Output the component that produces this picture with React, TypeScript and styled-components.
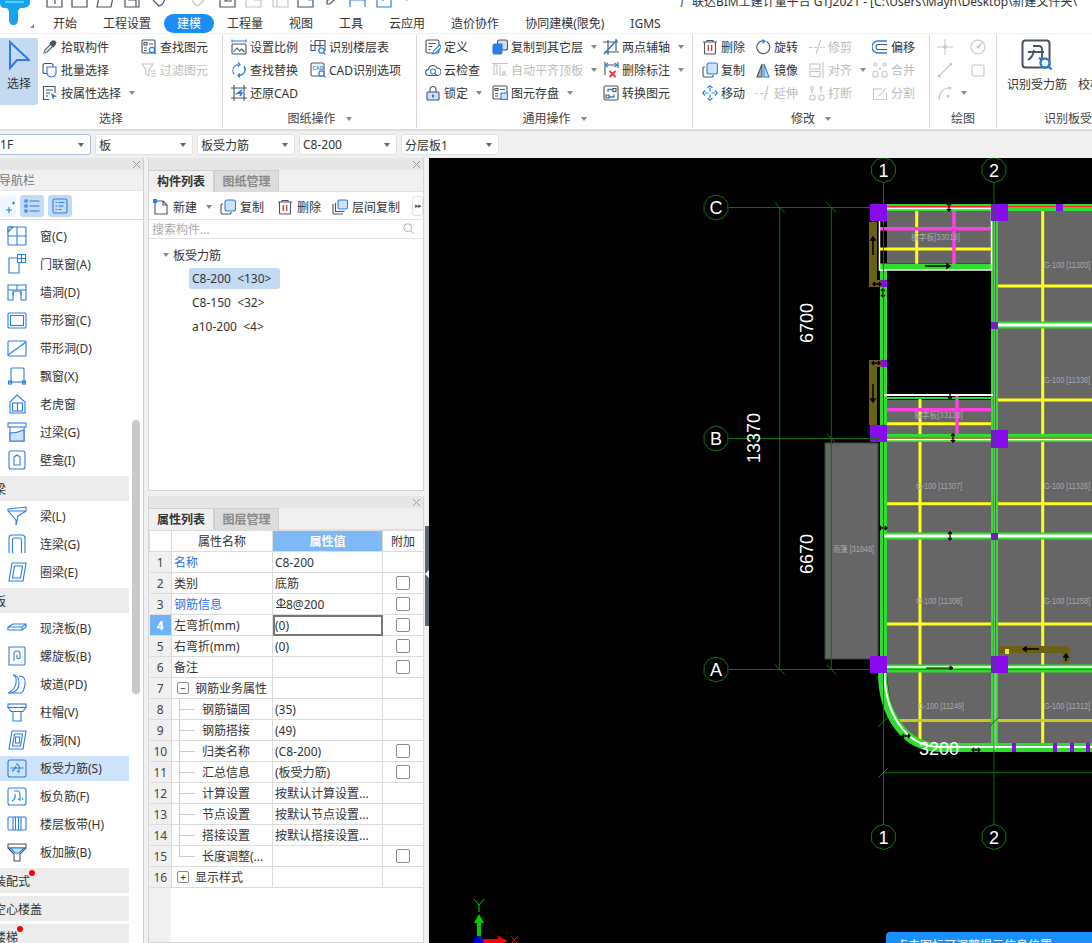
import React from 'react';
import styled, { createGlobalStyle } from 'styled-components';

const DK = '#4a5361';
const BL = '#2a7de8';
const GR = '#c6c6c6';
const LB = '#cfe2fb';

const Global = createGlobalStyle`
  html, body { margin: 0; padding: 0; background: #f0f0f0; }
  body { font-family: "Noto Sans", "Noto Sans CJK SC", sans-serif; font-size: 12px; color: #333; }
  * { box-sizing: border-box; }
`;

const Page = styled.div`width:1092px;height:943px;overflow:hidden;display:flex;flex-direction:column;background:#f0f0f0;`;
const Header = styled.header`height:33px;display:flex;background:#fff;flex:none;`;
const LogoBox = styled.div`width:40px;height:33px;flex:none;overflow:hidden;`;
const LogoSvg = styled.svg`display:block;width:40px;height:33px;`;
const HeaderRight = styled.div`flex:1;min-width:0;display:flex;flex-direction:column;`;
const QuickRow = styled.div`height:14px;overflow:hidden;display:flex;align-items:flex-start;position:relative;`;
const QuickIcons = styled.div`width:640px;flex:none;height:8px;overflow:hidden;position:relative;`;
const QuickIcon = styled.svg<{ $x: number }>`position:absolute;left:${p => p.$x - 40}px;top:-8px;width:20px;height:16px;fill:none;stroke-width:1.2;`;
const Title = styled.div`margin-top:-6px;line-height:16px;white-space:nowrap;color:#333;`;
const Tabs = styled.nav`height:19px;display:flex;`;
const Tab = styled.div<{ $on?: boolean }>`
  padding:0 13px;line-height:19px;border-radius:10px;
  color:${p => p.$on ? '#fff' : '#333'};background:${p => p.$on ? '#1b8ef5' : 'transparent'};
`;

const Ribbon = styled.section`height:98px;flex:none;display:flex;background:#fff;border-top:1px solid #f0f0f0;border-bottom:2px solid #dcdcdc;overflow:hidden;`;
const Group = styled.div<{ $w: number; $pad?: number; $last?: boolean }>`
  width:${p => p.$w}px;flex:none;height:93px;margin-top:1px;display:flex;flex-direction:column;
  padding-left:${p => p.$pad ?? 0}px;
  border-right:${p => p.$last ? 'none' : '1px solid #d8d8d8'};
`;
const GroupBody = styled.div`flex:1;display:flex;`;
const GroupLabel = styled.div<{ $pad?: number }>`
  height:18px;line-height:18px;display:flex;justify-content:center;align-items:center;gap:5px;color:#444;white-space:nowrap;
  margin-left:${p => -(p.$pad ?? 0)}px;
`;
const Col = styled.div<{ $w: number }>`width:${p => p.$w}px;flex:none;display:flex;flex-direction:column;`;
const Item = styled.div<{ $off?: boolean }>`
  height:23px;display:flex;align-items:center;gap:3px;white-space:nowrap;color:${p => p.$off ? '#bdbdbd' : '#333'};
`;
const Caret = styled.i`display:inline-block;width:0;height:0;border:3.5px solid transparent;border-top:4px solid #888;border-bottom:0;margin-left:5px;flex:none;`;
const BigSelect = styled.div`width:38px;height:67px;margin:3px 4px 0 0;background:#c4daf2;border-radius:0 3px 3px 0;display:flex;flex-direction:column;align-items:center;flex:none;color:#333;padding-top:2px;`;
const SelectArrow = styled.svg`width:22px;height:34px;flex:none;fill:none;stroke:${BL};stroke-width:2;`;
const BigTool = styled.div<{ $w: number; $ml?: number }>`display:flex;flex-direction:column;align-items:center;width:${p => p.$w}px;margin-left:${p => p.$ml ?? 0}px;flex:none;gap:4px;padding-top:4px;white-space:nowrap;`;
const Ic = styled.svg<{ $s?: number }>`width:${p => p.$s ?? 16}px;height:${p => p.$s ?? 16}px;flex:none;fill:none;stroke-width:1.1;`;

const ComboBar = styled.div`height:26px;flex:none;display:flex;gap:4px;padding-top:3px;margin-left:-7px;background:#f0f0f0;`;
const Combo = styled.div<{ $first?: boolean }>`
  width:98px;height:21px;background:#fff;border:1px solid ${p => p.$first ? '#a9c0de' : '#e2e2e2'};border-radius:3px;
  display:flex;align-items:center;justify-content:space-between;padding:0 6px 0 3px;color:#333;
`;
const ComboArrow = styled.i`width:0;height:0;border:3px solid transparent;border-top:4px solid #666;border-bottom:0;`;

const Main = styled.main`flex:1;min-height:0;display:flex;padding-top:1px;`;
const Nav = styled.aside`width:144px;flex:none;display:flex;flex-direction:column;background:#fff;border-right:1px solid #d0d0d0;position:relative;overflow:hidden;`;
const Strip = styled.div`height:12px;flex:none;background:#e6e6e6;display:flex;justify-content:flex-end;align-items:center;padding-right:2px;`;
const CloseX = styled.svg`width:9px;height:9px;stroke:#999;stroke-width:1;fill:none;`;
const NavTitle = styled.div`height:21px;flex:none;background:#f0f0f0;color:#777;line-height:21px;text-indent:-1px;border-bottom:1px solid #e4e4e4;white-space:nowrap;`;
const NavTools = styled.div`height:29px;flex:none;display:flex;align-items:center;gap:4px;border-bottom:1px solid #dcdcdc;padding-top:1px;`;
const NavTool = styled.div<{ $on?: boolean; $w: number }>`width:${p => p.$w}px;height:22px;border-radius:3px;background:${p => p.$on ? '#c4daf2' : '#f1f6fd'};display:flex;align-items:center;justify-content:center;`;
const NavList = styled.div`flex:1;min-height:0;padding-top:4px;display:flex;flex-direction:column;gap:3px;overflow:hidden;`;
const NavRow = styled.div<{ $on?: boolean }>`height:25px;flex:none;width:129px;display:flex;align-items:center;padding:0 0 1px 7px;gap:13px;white-space:nowrap;background:${p => p.$on ? '#cfe3fb' : 'transparent'};`;
const NavHead = styled.div`height:25px;flex:none;width:129px;background:#ececec;display:flex;align-items:center;white-space:nowrap;`;
const HeadText = styled.span`margin-left:-6px;position:relative;`;
const RedDot = styled.i`position:absolute;right:-5px;top:-2px;width:6px;height:6px;border-radius:50%;background:#f00;`;
const ScrollThumb = styled.div`position:absolute;left:132px;top:262px;width:8px;height:274px;border-radius:4px;background:#c9c9c9;`;

const Mid = styled.div`width:276px;flex:none;margin-left:4px;display:flex;flex-direction:column;gap:5px;`;
const Panel = styled.section<{ $h?: number }>`
  ${p => p.$h ? `height:${p.$h}px;flex:none;` : 'flex:1;min-height:0;'}
  display:flex;flex-direction:column;background:#fff;border:1px solid #d4d4d4;border-top:0;
`;
const TabRow = styled.div`height:22px;flex:none;display:flex;background:#f0f0f0;border-bottom:1px solid #e0e0e0;`;
const PTab = styled.div<{ $on?: boolean }>`
  width:65px;height:22px;text-align:center;line-height:22px;font-weight:700;
  color:${p => p.$on ? '#333' : '#8a8a8a'};background:${p => p.$on ? '#f0f0f0' : '#dcdcdc'};
  border:1px solid #cfcfcf;border-left:${p => p.$on ? 0 : '1px solid #cfcfcf'};border-bottom:0;
`;
const PTools = styled.div`height:28px;flex:none;display:flex;align-items:center;padding:2px 0 0 4px;border-bottom:1px solid #e4e4e4;`;
const PTool = styled.div<{ $w: number }>`width:${p => p.$w}px;flex:none;display:flex;align-items:center;gap:4px;white-space:nowrap;color:#333;`;
const MoreBtn = styled.div`width:11px;height:20px;border:1px solid #e2e2e2;border-radius:3px;margin:-2px 0 0 10px;display:flex;align-items:center;justify-content:center;font-size:7px;color:#555;letter-spacing:-1px;`;
const SearchRow = styled.div`height:19px;flex:none;display:flex;align-items:center;justify-content:space-between;padding:0 7px 0 3px;color:#aaa;border-bottom:1px solid #e4e4e4;`;
const Tree = styled.div`flex:1;padding-top:5px;`;
const TreeRoot = styled.div`height:22px;display:flex;align-items:center;padding-left:14px;gap:4px;`;
const TreeArrow = styled.i`width:0;height:0;border:3px solid transparent;border-top:4px solid #888;border-bottom:0;`;
const Leaf = styled.div`height:24px;display:flex;align-items:center;padding-left:40px;white-space:pre;`;
const LeafText = styled.span<{ $on?: boolean }>`height:21px;line-height:21px;padding:0 3px;border-radius:3px;min-width:91px;background:${p => p.$on ? '#c4daf2' : 'transparent'};`;

const TableWrap = styled.div`flex:1;min-height:0;background:linear-gradient(to right,#f0f0f0 22px,#fff 22px);`;
const Table = styled.table`border-collapse:collapse;table-layout:fixed;width:274px;`;
const Tr = styled.tr`height:21px;`;
const Idx = styled.td<{ $on?: boolean }>`
  width:22px;padding:0;text-align:center;border:1px solid #dcdcdc;border-left:0;
  background:${p => p.$on ? '#6fb2f5' : '#f0f0f0'};color:${p => p.$on ? '#fff' : '#444'};font-weight:${p => p.$on ? 700 : 400};
`;
const Td = styled.td<{ $blue?: boolean; $pad?: number; $focus?: boolean }>`
  padding:0 0 0 ${p => p.$pad ?? 2}px;height:21px;border:1px solid #dcdcdc;white-space:nowrap;overflow:hidden;line-height:19px;
  color:${p => p.$blue ? '#2a6fe8' : '#333'};
  ${p => p.$focus ? 'outline:2px solid #777;outline-offset:-2px;' : ''}
`;
const Th = styled.td<{ $on?: boolean }>`
  height:21px;padding:0;text-align:center;border:1px solid #dcdcdc;
  background:${p => p.$on ? '#7db8f7' : '#fff'};color:${p => p.$on ? '#fff' : '#333'};font-weight:${p => p.$on ? 700 : 400};
`;
const CheckCell = styled.td`padding:0;border:1px solid #dcdcdc;text-align:center;line-height:0;`;
const Check = styled.i`display:inline-block;width:14px;height:14px;border:1px solid #8a8a8a;border-radius:2px;background:#fff;vertical-align:middle;`;
const RowInner = styled.div`display:flex;align-items:center;height:19px;`;
const Branch = styled.i<{ $end?: boolean }>`
  width:23px;height:21px;flex:none;margin:-1px 0;
  background:linear-gradient(#ccc,#ccc) 0 0/1px ${p => p.$end ? '50%' : '100%'} no-repeat,linear-gradient(#ccc,#ccc) 0 50%/16px 1px no-repeat;
`;
const Expander = styled.i`width:12px;height:12px;border:1px solid #888;border-radius:2px;display:flex;align-items:center;justify-content:center;font-style:normal;font-size:10px;line-height:10px;margin:0 6px 0 3px;flex:none;`;
const Rebar = styled.svg`width:10px;height:11px;margin:-3px 0 0 1px;fill:none;stroke:#333;stroke-width:1;vertical-align:middle;`;

const Divider = styled.div`width:5px;flex:none;background:#f0f0f0;position:relative;`;
const Handle = styled.div`position:absolute;left:1px;top:368px;width:4px;height:100px;background:#5a6570;&::after{content:'';position:absolute;top:44px;left:0;border:4px solid transparent;border-right:4px solid #fff;border-left:0;}`;
const Canvas = styled.div`flex:1;min-width:0;background:#000;position:relative;overflow:hidden;`;
const Drawing = styled.svg`display:block;width:663px;height:785px;`;
const Toast = styled.div`position:absolute;left:457px;bottom:-9px;width:260px;height:20px;background:#1890ff;border-radius:4px 0 0 0;color:#fff;padding:7px 0 0 10px;line-height:14px;white-space:nowrap;`;

const I = ({ children, s, box = 16 }: { children: React.ReactNode; s?: number; box?: number }) => (
  <Ic $s={s} viewBox={`0 0 ${box} ${box}`}>{children}</Ic>
);
const Mag = ({ x = 11, y = 11 }: { x?: number; y?: number }) => (
  <g stroke={BL} strokeWidth={1.2}><circle cx={x} cy={y} r={2.6} fill="#fff" /><path d={`M${x + 2} ${y + 2}l2 2`} /></g>
);

const icons: Record<string, React.ReactNode> = {
  pick: <g><path d="M2 14l1-3 6-6 2 2-6 6z" stroke={DK} /><path d="M8 4l4 4M10 2.500c1-1 2-1 3 0s1 2 0 3l-2 2-3-3z" stroke={DK} fill={DK} /><path d="M2 14l2-1 5-5-1-1-5 5z" fill={LB} /></g>,
  batch: <g><rect x="1" y="1.500" width="10" height="10" rx="2" stroke={DK} /><path d="M5 5h9v6c0 2-2 3.500-4.500 4C7 14.500 5 13 5 11z" stroke={BL} fill="#fff" /></g>,
  attr: <g><path d="M13 8V1.500H1.500v13H7" stroke={DK} /><path d="M4 5h7M4 8h4M4 11h2" stroke={DK} /><path d="M9 8l6 3.500-3 .8-1 3z" fill={BL} /></g>,
  find: <g><rect x="1" y="1" width="13" height="13" rx="1" stroke={DK} /><rect x="3" y="3.500" width="3" height="2.500" stroke={DK} /><path d="M8 5h4M3 9h3M3 11.500h3" stroke={DK} /><Mag /></g>,
  filter: <g stroke={GR}><path d="M1 2h11L8 8v6L5 12V8z" /><path d="M10 9h5M10 11.500h5M10 14h5" /></g>,
  scale: <g><path d="M1 2h14M1 .5v3M15 .5v3" stroke={BL} /><rect x="1" y="5" width="14" height="10" rx="1" stroke={DK} /><path d="M2.500 13l3.500-4 2.500 3 2-2 3 3" stroke={DK} /></g>,
  swap: <g stroke={BL} strokeWidth={1.3}><path d="M3 12A6 6 0 0 1 8 2.500" strokeDasharray="2 .6" /><path d="M13 4A6 6 0 0 1 8 13.500" /><path d="M7 .5l2 2-2 2M9 11.500l-2 2 2 2" /></g>,
  cadtable: <g><path d="M5 1.500h10v10H8M5 1.500v10H1V5M10 1.500v7M1 6.500h13" stroke={DK} /><path d="M1 1v2" stroke={BL} /><Mag x={11.500} y={11.500} /></g>,
  cad: <g><rect x="1" y="1" width="13" height="13" rx="1.500" stroke={DK} /><text x="2.500" y="7.500" fontSize="5" fontWeight="700" fill={BL} stroke="none" fontFamily="Liberation Sans">CAD</text><Mag x={11.500} y={11.500} /></g>,
  restore: <g><path d="M3 0v16M13 0v16M0 3h16M0 13h16" stroke={DK} /><path d="M11 5L6.500 8.500 11 8l-2 3" stroke={BL} strokeWidth={1.6} /></g>,
  define: <g><rect x="1" y="1" width="13" height="13" rx="1.500" stroke={DK} /><path d="M3.500 4.500h7M3.500 7.500h4M3.500 10.500h2" stroke={DK} /><path d="M14.500 6L8.500 12l-1 3 3-1 6-6z" stroke={BL} fill="#fff" /></g>,
  cloud: <g><path d="M4 13.500a3 3 0 0 1-.5-6A4.500 4.500 0 0 1 12 6a3.700 3.700 0 0 1 .5 7.500z" stroke={DK} /><circle cx="8" cy="9.500" r="2.500" stroke={BL} /><path d="M10 11.500l2 2" stroke={BL} /></g>,
  lock: <g><path d="M5 7V4.500a3 3 0 0 1 6 0V7" stroke={DK} /><rect x="2" y="7" width="12" height="8" rx="1" fill={LB} stroke={DK} /><path d="M8 9.500v3" stroke={BL} strokeWidth={2} /></g>,
  copyto: <g><rect x="5.500" y="1" width="10" height="10" rx="2" stroke={DK} fill="#d7dde6" /><path d="M1 7a2 2 0 0 1 2-2h7v8a2 2 0 0 1-2 2H3a2 2 0 0 1-2-2z" stroke={BL} fill={BL} /></g>,
  autoalign: <g stroke={GR}><path d="M0 1.500h16" /><path d="M2 3h3v9H2zM8 3v11" /><text x="9" y="14" fontSize="8" fontWeight="700" fill={GR} stroke="none" fontFamily="Liberation Sans">A</text></g>,
  store: <g><rect x="1" y="1" width="14" height="13" rx="1" stroke={DK} /><rect x="3" y="3.500" width="3" height="2" stroke={DK} /><path d="M8 4.500h5M3 8.500h3M3 11h3" stroke={DK} /><rect x="9" y="8" width="6.500" height="6.500" fill={LB} stroke={BL} /></g>,
  twopoint: <g><path d="M5 1v15M0 3h15M13 0v12M1 13h15" stroke={DK} /><path d="M1 15L14 1" stroke={BL} strokeWidth={1.6} /></g>,
  delmark: <g><path d="M2 0v13M15 0v6M3 3h11" stroke={DK} /><path d="M5 1L2.500 3 5 5M11.500 1L14.500 3l-3 2" stroke={BL} /><path d="M6.500 9l6 6M12.500 9l-6 6" stroke="#e33" strokeWidth={1.8} /></g>,
  convert: <g><rect x="1" y="1" width="14" height="14" rx="1.500" stroke={DK} /><path d="M5 7V4.500h5" stroke={BL} strokeWidth={1.3} /><path d="M11 9.500V12H6" stroke={BL} strokeWidth={1.3} /><path d="M3 10h3v3H3zM10 3.500h3v3h-3z" stroke={DK} /></g>,
  del: <g><path d="M1 3h14M5 3V1.500h6V3" stroke={DK} /><path d="M2.500 3v11a1 1 0 0 0 1 1h9a1 1 0 0 0 1-1V3" stroke={DK} /><path d="M6.300 6v6M9.700 6v6" stroke="#d22" strokeWidth={1.2} /></g>,
  copy: <g><path d="M3 5H2a1 1 0 0 0-1 1v7.500A1.500 1.500 0 0 0 2.500 15H10a1 1 0 0 0 1-1v-1" stroke={DK} /><rect x="5" y="1" width="10.500" height="11" rx="2" fill={LB} stroke={BL} /></g>,
  move: <g stroke={BL} strokeWidth={1.2}><path d="M8 3v3.500M8 9.500V13M3 8h3.500M9.500 8H13" /><path d="M5.500 3L8 .8 10.500 3M5.500 13L8 15.200 10.500 13M3 5.500L.8 8 3 10.500M13 5.500L15.200 8 13 10.500" /></g>,
  rotate: <g><path d="M11.500 2.500A6.500 6.500 0 1 1 7 1.800" stroke={DK} /><path d="M7 0l4 2-3.500 3z" fill={BL} /></g>,
  mirror: <g><path d="M7 2L2 15h5z" fill="#a7b0bd" stroke={DK} /><path d="M9 2l5 13H9z" fill={LB} stroke={BL} /></g>,
  trim: <g stroke={GR}><path d="M0 8.500h3M5 8.500h3M11 8.500h2M14 8.500h2M11.500 1L7 15" /></g>,
  extend: <g stroke={GR}><path d="M0 8.500h3M5 8.500h3M11.500 8.500h2M13 1l-3.500 14" /></g>,
  align: <g stroke={GR}><rect x="1" y="2" width="10" height="5" /><rect x="1" y="9.500" width="10" height="5" /><path d="M14 0v16" /></g>,
  break: <g stroke={GR}><circle cx="3" cy="3" r="1.500" /><circle cx="12" cy="2.500" r="1" /><rect x="1" y="10" width="5" height="5" rx="2" /><rect x="10" y="10" width="5" height="5" rx="2" /><path d="M12 4v4M3 5v3" /></g>,
  merge: <g stroke={GR}><circle cx="3.500" cy="2.500" r="1.500" /><circle cx="12.500" cy="2.500" r="1.500" /><rect x="1" y="9.500" width="5" height="5.500" rx="2" /><rect x="10" y="9.500" width="5" height="5.500" rx="2" /><path d="M7 6l1 1.500L9 6" /></g>,
  split: <g stroke={GR}><path d="M10 4H1.500v10.500h13V8" /><path d="M7 11l7-8" /></g>,
  offset2: <g><path d="M15 2H6a6 6 0 0 0 0 12h9" stroke={BL} strokeWidth={1.3} /><path d="M15 5.500H6.500a2.500 2.500 0 0 0 0 5H15" stroke={DK} /></g>,
  pt: <g stroke={GR}><path d="M0 8h6M10 8h6M8 0v6M8 10v6" /><circle cx="8" cy="8" r="1.500" fill={GR} /></g>,
  circ: <g stroke={GR}><circle cx="8" cy="8" r="7" /><circle cx="8" cy="8" r="1" /><path d="M8 8l4-4" /></g>,
  line: <g stroke={GR}><path d="M2 14L14 2" /><circle cx="2" cy="14" r="1" /><circle cx="14" cy="2" r="1" /></g>,
  rect: <g stroke={GR}><rect x="2" y="3" width="12" height="11" rx="1.500" /></g>,
  arc: <g stroke={GR}><path d="M2 15C2 8 6 3 12 3" /><circle cx="11" cy="11" r="1" /><circle cx="13" cy="3" r="1" /></g>,
  plus: <g stroke={BL}><path d="M6 12h6M9 9v6M12 5h3M13.500 3.500v3" /></g>,
  list: <g stroke={BL}><rect x="1" y="2" width="2" height="2" /><rect x="1" y="7" width="2" height="2" /><rect x="1" y="12" width="2" height="2" /><path d="M5.500 3h10M5.500 8h10M5.500 13h10" /></g>,
  detail: <g stroke={BL}><rect x="1" y="1" width="14" height="14" rx="1.500" /><path d="M3.500 4.500h1.500M6.500 4.500h6M3.500 8h1.500M6.500 8h5M3.500 11.500h1.500M6.500 11.500h3" /></g>,
  new: <g><path d="M3 2h7l4 4v9H2V4" stroke={DK} /><path d="M10 2v4h4" stroke={DK} /><rect x="0" y="0" width="4" height="4" fill={BL} /></g>,
  layercopy: <g><path d="M1 5v9a1 1 0 0 0 1 1h9M3.500 4v8.500h9" stroke={DK} /><rect x="6" y="1" width="9.500" height="9" rx="1.500" fill={LB} stroke={BL} /></g>,
  search: <g stroke="#aaa"><circle cx="6.500" cy="6.500" r="4.500" /><path d="M10 10l3.500 3.500" /></g>,
};
const Icon = ({ n }: { n: string }) => <I>{icons[n]}</I>;

const nav: Record<string, React.ReactNode> = {
  window: <g><rect x="1" y="1" width="18" height="18" rx="1" /><path d="M10 1v18M1 10h18" /><path d="M1 6l5-5H1z" fill={LB} /></g>,
  doorwin: <g><path d="M12 8v11H2V4h8" /><rect x="10.500" y="0.500" width="8" height="8" /><path d="M14.500 0.500v8M10.500 4.500h8" /></g>,
  hole: <g><path d="M1 18V3h18v15h-5v-5a4 4 0 0 0-8 0v5z" /><path d="M1 8h18M10 3v5M6 8v5M14 8v5" /></g>,
  strip: <g><rect x="1" y="3" width="18" height="15" rx="1" /><rect x="3.500" y="5.500" width="13" height="10" /></g>,
  striphole: <g><rect x="1" y="3" width="18" height="15" rx="1" /><path d="M1 17L19 4" /></g>,
  bay: <g><path d="M4 17V3a1 1 0 0 1 1-1h11a1 1 0 0 1 1 1v14" /><path d="M1 16h18" /><rect x="1.500" y="15" width="3" height="3" /><rect x="15.500" y="15" width="3" height="3" /></g>,
  dormer: <g><path d="M10 1l8 7v11H3V8z" /><rect x="5.500" y="9" width="10" height="8" /><path d="M10.500 9v8" /></g>,
  lintel: <g><rect x="1" y="1" width="18" height="4" /><path d="M3 5v14h14V5" /><path d="M3 11q7 0 14-3v11H3z" fill={LB} /></g>,
  niche: <g><rect x="2" y="1" width="16" height="18" rx="2" /><path d="M7 15V7l3-2 3 2v8z" /></g>,
  beam: <g><path d="M1 3l18-2v4L1 5zM1 5l8 9V19l2-9 8-5" /></g>,
  link: <g><path d="M2 19V4a3 3 0 0 1 3-3h10a3 3 0 0 1 3 3v15" /><path d="M5.500 19V6a2 2 0 0 1 2-2h5a2 2 0 0 1 2 2v13" /></g>,
  ring: <g><path d="M5 1h14l-3 18H2z" /><path d="M7.500 4h8l-2 12H5.500z" /></g>,
  cast: <g><path d="M1 9l5-3h13v3l-4 3H1z" /><path d="M1 9h14l4-3M15 9v3" /></g>,
  spiral: <g><path d="M2 1v18h15a2 2 0 0 0 1-1V2a1 1 0 0 0-1-1z" /><path d="M7 15V8a3 3 0 0 1 6 0v4a2 2 0 0 1-3 0V9" /></g>,
  ramp: <g><path d="M6 1q6 0 6 8t-8 10H1q7-3 8-10T6 1zM12 2q7 0 6 8t-4 9H4" /></g>,
  cap: <g><rect x="1" y="2" width="18" height="3.500" /><path d="M1 5.500h18l-3 4H4zM6 9.500V19h8V9.500" /></g>,
  opening: <g><path d="M5 1h14l-3 18H2z" /><path d="M7.500 4h8l-2 12H5.500z" /><rect x="8.500" y="7" width="4" height="6" /></g>,
  force: <g><rect x="1" y="2" width="18" height="17" rx="2" /><path d="M3.500 10h13M9 6a3.500 3.500 0 0 1 3 5v3l-2-1M5 13q3-1 4-5" /></g>,
  neg: <g><rect x="1" y="2" width="18" height="17" rx="2" /><path d="M7 5h4q2 0 2 5v4l-2-1M5 15q4-2 3-7M15 12l1 2" /></g>,
  band: <g><rect x="1" y="3" width="18" height="13" rx="1" /><path d="M6 3v13M14 3v13M8.500 3v13M11.500 3v13" /></g>,
  haunch: <g stroke={DK}><path d="M1 2h18v4H1zM1 6l6 6v7h6v-7l6-6" /><path d="M3 6l5 5h4l5-5z" fill={LB} stroke={BL} /></g>,
};
const NavIcon = ({ n }: { n: string }) => (
  <Ic $s={20} viewBox="0 0 20 20" stroke={BL}>{nav[n]}</Ic>
);

type It = [string, string, boolean?, boolean?];
const Column = ({ w, items }: { w: number; items: It[] }) => (
  <Col $w={w}>
    {items.map(([ic, t, caret, off]) => (
      <Item key={t + ic} $off={off}>
        <Icon n={ic} />
        {t && <span>{t}</span>}
        {caret && <Caret />}
      </Item>
    ))}
  </Col>
);

const tabs = ['开始', '工程设置', '建模', '工程量', '视图', '工具', '云应用', '造价协作', '协同建模(限免)', 'IGMS'];

type Row = { t: 'r'; n: string; l: string; on?: boolean } | { t: 'h'; l: string; dot?: boolean };
const navRows: Row[] = [
  { t: 'r', n: 'window', l: '窗(C)' }, { t: 'r', n: 'doorwin', l: '门联窗(A)' }, { t: 'r', n: 'hole', l: '墙洞(D)' },
  { t: 'r', n: 'strip', l: '带形窗(C)' }, { t: 'r', n: 'striphole', l: '带形洞(D)' }, { t: 'r', n: 'bay', l: '飘窗(X)' },
  { t: 'r', n: 'dormer', l: '老虎窗' }, { t: 'r', n: 'lintel', l: '过梁(G)' }, { t: 'r', n: 'niche', l: '壁龛(I)' },
  { t: 'h', l: '梁' },
  { t: 'r', n: 'beam', l: '梁(L)' }, { t: 'r', n: 'link', l: '连梁(G)' }, { t: 'r', n: 'ring', l: '圈梁(E)' },
  { t: 'h', l: '板' },
  { t: 'r', n: 'cast', l: '现浇板(B)' }, { t: 'r', n: 'spiral', l: '螺旋板(B)' }, { t: 'r', n: 'ramp', l: '坡道(PD)' },
  { t: 'r', n: 'cap', l: '柱帽(V)' }, { t: 'r', n: 'opening', l: '板洞(N)' }, { t: 'r', n: 'force', l: '板受力筋(S)', on: true },
  { t: 'r', n: 'neg', l: '板负筋(F)' }, { t: 'r', n: 'band', l: '楼层板带(H)' }, { t: 'r', n: 'haunch', l: '板加腋(B)' },
  { t: 'h', l: '装配式', dot: true }, { t: 'h', l: '空心楼盖' }, { t: 'h', l: '楼梯', dot: true },
];

const X = () => <CloseX viewBox="0 0 9 9"><path d="M1 1l7 7M8 1L1 8" /></CloseX>;

const Bubble = ({ x, y, t }: { x: number; y: number; t: string }) => {
  const pts = Array.from({ length: 10 }, (_, i) => {
    const a = (i * Math.PI) / 5 + Math.PI / 10;
    return `${(x + 12.5 * Math.cos(a)).toFixed(1)},${(y + 12.5 * Math.sin(a)).toFixed(1)}`;
  }).join(' ');
  return (
    <g>
      <polygon points={pts} fill="#000" stroke="#0a7a0a" />
      <text x={x} y={y + 6.500} textAnchor="middle" fontSize="18" fill="#fff" fontFamily="Liberation Sans">{t}</text>
    </g>
  );
};
const Lbl = ({ x, y, t, w = 46 }: { x: number; y: number; t: string; w?: number }) => (
  <text x={x} y={y} fontSize="8.500" fill="#a8a8a8" textLength={w} lengthAdjust="spacingAndGlyphs" fontFamily="Liberation Sans, Noto Sans CJK SC, sans-serif">{t}</text>
);
const Dim = ({ x, y, t }: { x: number; y: number; t: string }) => (
  <text transform={`rotate(-90 ${x} ${y})`} x={x} y={y} textAnchor="middle" fontSize="18" fill="#fff" fontFamily="Liberation Sans">{t}</text>
);
const Tick = ({ x, y }: { x: number; y: number }) => <path d={`M${x - 5} ${y - 5}l10 10`} stroke="#0b7a0b" />;
const Mark = ({ x, y, v }: { x: number; y: number; v?: boolean }) => (
  <path d={v ? `M${x} ${y - 4}V${y + 4}M${x - 2} ${y - 2}l2-2 2 2M${x - 2} ${y + 2}l2 2 2-2` : `M${x - 4} ${y}H${x + 4}M${x - 2} ${y - 2}l-2 2 2 2M${x + 2} ${y - 2}l2 2-2 2`} stroke="#000" strokeWidth="1.300" fill="none" />
);

const CadDrawing = () => (
  <Drawing viewBox="429 158 663 785">
    <rect x="429" y="158" width="663" height="785" fill="#000" />
    <rect x="825" y="443" width="53" height="216" fill="#666" stroke="#444" />
    <g fill="#666">
      <rect x="887" y="211" width="104" height="52" />
      <rect x="998" y="211" width="94" height="535" />
      <rect x="887" y="400" width="104" height="35" />
      <rect x="887" y="442" width="104" height="224" />
      <path d="M887 668H992V744H940C905 744 887 712 887 668Z" />
    </g>
    <g stroke="#ffff1e" strokeWidth="3" fill="none">
      <path d="M916.700 208V267M880 249H991" />
      <path d="M920 397V745M883 423.700H992" />
      <path d="M1042.700 208V746" />
      <path d="M997 286H1092M995 400H1092" />
      <path d="M884 503.700H1092M884 624H1092" />
    </g>
    <path d="M890 720.500H1092" stroke="#c8c81e" strokeWidth="3" />
    <g stroke="#ff3ee0" strokeWidth="3.500" fill="none">
      <path d="M879 228.700H991M954 207V270" />
      <path d="M883 409.700H993M957 395V437" />
    </g>
    <g stroke="#2fdc2f" fill="none">
      <path d="M870 207.500H1092" strokeWidth="7" />
      <path d="M883.500 270V672" strokeWidth="7" />
      <path d="M994.500 207V750" strokeWidth="7" />
      <path d="M880 266.500H991" strokeWidth="6" />
      <path d="M883 398H993" strokeWidth="2" />
      <path d="M880 438H1092" strokeWidth="8" />
      <path d="M884 536H1092M998 325H1092" strokeWidth="7" />
      <path d="M880 668.500H1092" strokeWidth="8" />
      <path d="M882.500 672C882.500 715 905 747.500 940 747.500H1092" strokeWidth="9" />
    </g>
    <g stroke="#fff" fill="none">
      <rect x="879.500" y="208.500" width="112" height="61.500" strokeWidth="1.500" />
      <path d="M883 395H993" strokeWidth="2" />
      <path d="M994.500 208V750" strokeWidth="1.500" />
      <path d="M884 536H1092M998 325H1092" strokeWidth="3" />
      <path d="M884 439.500H1092M884 667H1092" strokeWidth="1.500" />
      <path d="M884.500 672C884.500 712 905 747 940 747H1092" strokeWidth="2" />
    </g>
    <g stroke="#f22" strokeWidth="1" fill="none">
      <path d="M880 206.500H1092M883.500 280V350M883.500 395V669M880 438H1092M880 669.500H1092M995.500 207V669" />
    </g>
    <g fill="#8a0af0">
      <rect x="870" y="204" width="17" height="17" /><rect x="991" y="204" width="17" height="17" />
      <rect x="1056" y="204" width="7" height="7" /><rect x="880" y="280" width="7" height="7" />
      <rect x="880" y="360" width="7" height="7" /><rect x="870" y="425" width="17" height="17" />
      <rect x="991" y="430" width="17" height="18" /><rect x="991" y="322" width="7" height="7" />
      <rect x="991" y="533" width="7" height="7" /><rect x="870" y="656" width="17" height="17" />
      <rect x="991" y="656" width="17" height="17" />
      <rect x="1012" y="743" width="4" height="9" /><rect x="1053" y="743" width="4" height="9" />
      <rect x="1070" y="743" width="4" height="9" /><rect x="1086" y="743" width="4" height="9" />
    </g>
    <g fill="#6b6116">
      <rect x="869" y="222" width="8" height="65" /><rect x="877" y="280" width="4" height="7" />
      <rect x="869" y="360" width="8" height="65" /><rect x="877" y="360" width="4" height="7" />
      <path d="M999 646H1069V663H1063V653H999Z" />
    </g>
    <g stroke="#000" strokeWidth="1.500" fill="#000">
      <path d="M873 237V255M871 240l2-3 2 3z" />
      <path d="M873 384V402M871 399l2 3 2-3z" />
      <path d="M1023 649H1039M1026 647l-3 2 3 2z" />
      <path d="M1066 656V661M1064 657l2-3 2 3z" />
      <path d="M925 266H950M947 264l3 2-3 2z" />
      <path d="M926 668H953M950 666l3 2-3 2z" strokeWidth="1" />
    </g>
    <Mark x={949} y={207} v /><Mark x={883} y={293} v /><Mark x={950} y={395} v />
    <Mark x={953} y={438} v /><Mark x={883} y={528} /><Mark x={950} y={536} v />
    <Mark x={877} y={284} /><Mark x={876} y={363} /><Mark x={906} y={736} /><Mark x={976} y={750} />
    <rect x="1005" y="649" width="4" height="5" fill="#ffe81e" />
    <g stroke="#0b6f0b" strokeWidth="1" fill="none">
      <path d="M728.500 207.500H880M728.500 438.500H880M728.500 669.500H880" />
      <path d="M883.500 182V825M994 182V825" />
      <path d="M779.700 207V669M831.300 207V669" />
      <path d="M883 772.500H1092" stroke="#0a5a0a" strokeWidth="1.500" />
    </g>
    <Tick x={779.700} y={207.500} /><Tick x={831.300} y={207.500} /><Tick x={831.300} y={438.500} />
    <Tick x={779.700} y={669.500} /><Tick x={831.300} y={669.500} />
    <path d="M878 727l10-10M878 778l10-10M989 727l10-10" stroke="#0b7a0b" />
    <Bubble x={883.500} y={170} t="1" /><Bubble x={994} y={170} t="2" />
    <Bubble x={883.500} y={837} t="1" /><Bubble x={994} y={837} t="2" />
    <Bubble x={716} y={207.500} t="C" /><Bubble x={716} y={438.500} t="B" /><Bubble x={716} y={669.500} t="A" />
    <Dim x={813} y={323} t="6700" /><Dim x={760} y={438} t="13370" /><Dim x={813} y={554} t="6670" />
    <text x="919" y="755" fontSize="18" fill="#fff" fontFamily="Liberation Sans">3200</text>
    <Lbl x={911} y={240} t="板字板[33018]" w={49} /><Lbl x={914} y={418} t="板字板[33128]" w={49} />
    <Lbl x={1044} y={268} t="G-100 [11303]" /><Lbl x={1044} y={383} t="G-100 [11336]" />
    <Lbl x={916} y={489} t="G-100 [11307]" /><Lbl x={1044} y={489} t="G-100 [11326]" />
    <Lbl x={916} y={604} t="G-100 [11308]" /><Lbl x={1044} y={604} t="G-100 [11258]" />
    <Lbl x={918} y={709} t="G-100 [11249]" /><Lbl x={1044} y={709} t="G-100 [11312]" />
    <Lbl x={833} y={552} t="雨篷 [31848]" w={41} />
    <path d="M479 939V920" stroke="#0c0" strokeWidth="4" />
    <path d="M479 914l-5 9h10z" fill="#0c0" />
    <path d="M474 899l5 6 5-6M479 905v7" stroke="#0c0" fill="none" />
    <path d="M482 941H500" stroke="#f00" strokeWidth="4" />
    <path d="M508 941l-10-5v10z" fill="#f00" />
    <circle cx="478.500" cy="941" r="5" fill="#00c" />
    <path d="M511 936l7 8M518 936l-7 8" stroke="#f00" />
  </Drawing>
);

const Cb = () => <CheckCell><Check /></CheckCell>;
const Empty = () => <CheckCell />;

export default function App() {
  return (
    <Page>
      <Global />
      <Header>
        <LogoBox>
          <LogoSvg viewBox="0 0 40 33">
            <path d="M0 0H30V3C30 6 26 8 22 8C19 8 18 10 18 13V20C18 23 16 25 13.500 25C11 25 9 23 9 20V13C9 10 8 8 5 8C2 8 0 6 0 3Z" fill="#17a3ee" />
            <path d="M5 2H24" stroke="#7fd4fb" strokeWidth="1.500" />
            <path d="M34 24v4h-4z" fill="#888" />
          </LogoSvg>
        </LogoBox>
        <HeaderRight>
          <QuickRow>
            <QuickIcons>
              <QuickIcon $x={45} viewBox="0 0 20 16" stroke={DK}><path d="M2 0v15h15V0M10 12V5" /><path d="M7 8l3-3 3 3" stroke={BL} /></QuickIcon>
              <QuickIcon $x={70} viewBox="0 0 20 16" stroke={DK}><path d="M2 0v15h15V0" /></QuickIcon>
              <QuickIcon $x={96} viewBox="0 0 20 16" stroke={DK}><path d="M4 0L1 15h14l3-15" /></QuickIcon>
              <QuickIcon $x={123} viewBox="0 0 20 16" stroke={DK}><path d="M2 0v15h14V0M5 8h8v7" /></QuickIcon>
              <QuickIcon $x={150} viewBox="0 0 20 16" stroke={DK}><path d="M3 8l6 6q7-2 6-14" /></QuickIcon>
              <QuickIcon $x={187} viewBox="0 0 20 16" stroke={GR}><path d="M17 8l-6 6Q4 12 5 0" /></QuickIcon>
              <QuickIcon $x={218} viewBox="0 0 20 16" stroke={DK}><path d="M2 0v15h15V0M6 2h7L7 9h7" /></QuickIcon>
              <QuickIcon $x={244} viewBox="0 0 20 16" stroke={GR}><path d="M2 0v15h15V0M10 8h8" /></QuickIcon>
              <QuickIcon $x={271} viewBox="0 0 20 16" stroke={GR}><path d="M2 0v15h15V0M6 0v15" /></QuickIcon>
              <QuickIcon $x={296} viewBox="0 0 20 16" stroke={DK}><path d="M2 0v15h15V0" /><circle cx="14" cy="5" r="3" stroke={BL} /></QuickIcon>
              <QuickIcon $x={322} viewBox="0 0 20 16" stroke={DK}><path d="M2 6h16M14 0l3 3-9 9H5V9z" /></QuickIcon>
              <QuickIcon $x={348} viewBox="0 0 20 16" stroke={BL}><path d="M2 0v15M17 0v15M2 5h15M2 8h15" /></QuickIcon>
              <QuickIcon $x={374} viewBox="0 0 20 16" stroke={DK}><path d="M3 0v15h14V0M6 6h6M9 3v6" stroke={BL} /></QuickIcon>
              <QuickIcon $x={400} viewBox="0 0 20 16" stroke={DK}><path d="M3 2h8M4 5l3 3 3-3" /></QuickIcon>
            </QuickIcons>
            <Title>广联达BIM土建计量平台 GTJ2021 - [C:\Users\Mayn\Desktop\新建文件夹\</Title>
          </QuickRow>
          <Tabs>{tabs.map(t => <Tab key={t} $on={t === '建模'}>{t}</Tab>)}</Tabs>
        </HeaderRight>
      </Header>

      <Ribbon>
        <Group $w={223}>
          <GroupBody>
            <BigSelect>
              <SelectArrow viewBox="0 0 22 34"><path d="M2 2V28L9 20H21Z" /></SelectArrow>
              <span>选择</span>
            </BigSelect>
            <Column w={99} items={[['pick', '拾取构件'], ['batch', '批量选择'], ['attr', '按属性选择', true]]} />
            <Column w={70} items={[['find', '查找图元'], ['filter', '过滤图元', false, true]]} />
          </GroupBody>
          <GroupLabel>选择</GroupLabel>
        </Group>
        <Group $w={194} $pad={8}>
          <GroupBody>
            <Column w={79} items={[['scale', '设置比例'], ['swap', '查找替换'], ['restore', '还原CAD']]} />
            <Column w={90} items={[['cadtable', '识别楼层表'], ['cad', 'CAD识别选项']]} />
          </GroupBody>
          <GroupLabel $pad={8}>图纸操作<Caret /></GroupLabel>
        </Group>
        <Group $w={276} $pad={8}>
          <GroupBody>
            <Column w={67} items={[['define', '定义'], ['cloud', '云检查'], ['lock', '锁定', true]]} />
            <Column w={111} items={[['copyto', '复制到其它层', true], ['autoalign', '自动平齐顶板', true, true], ['store', '图元存盘', true]]} />
            <Column w={80} items={[['twopoint', '两点辅轴', true], ['delmark', '删除标注', true], ['convert', '转换图元']]} />
          </GroupBody>
          <GroupLabel $pad={8}>通用操作<Caret /></GroupLabel>
        </Group>
        <Group $w={237} $pad={9}>
          <GroupBody>
            <Column w={53} items={[['del', '删除'], ['copy', '复制'], ['move', '移动']]} />
            <Column w={54} items={[['rotate', '旋转'], ['mirror', '镜像'], ['extend', '延伸', false, true]]} />
            <Column w={63} items={[['trim', '修剪', false, true], ['align', '对齐', true, true], ['break', '打断', false, true]]} />
            <Column w={50} items={[['offset2', '偏移'], ['merge', '合并', false, true], ['split', '分割', false, true]]} />
          </GroupBody>
          <GroupLabel $pad={9}>修改<Caret /></GroupLabel>
        </Group>
        <Group $w={67} $pad={7}>
          <GroupBody>
            <Column w={33} items={[['pt', ''], ['line', ''], ['arc', '', true, true]]} />
            <Column w={20} items={[['circ', ''], ['rect', '']]} />
          </GroupBody>
          <GroupLabel $pad={7}>绘图</GroupLabel>
        </Group>
        <Group $w={166} $pad={5} $last>
          <GroupBody>
            <BigTool $w={70}>
              <I s={32} box={32}>
                <rect x="1.500" y="1.500" width="27" height="27" rx="3" stroke={DK} strokeWidth="2" />
                <path d="M7 13h16M12 7h6q3 0 3 4v10l-3-2M7 21q5-3 6-10" stroke={DK} strokeWidth="1.800" />
                <circle cx="24" cy="24" r="4.500" stroke={BL} strokeWidth="2.400" fill="#fff" />
                <path d="M27.500 27.500l3 3" stroke={BL} strokeWidth="2.400" />
              </I>
              <span>识别受力筋</span>
            </BigTool>
            <BigTool $w={72} $ml={6}>
              <I s={32} box={32}><g /></I>
              <span>校核板筋图元</span>
            </BigTool>
          </GroupBody>
          <GroupLabel $pad={5}>识别板受力筋</GroupLabel>
        </Group>
      </Ribbon>

      <ComboBar>
        <Combo $first><span>&nbsp;1F</span><ComboArrow /></Combo>
        <Combo><span>板</span><ComboArrow /></Combo>
        <Combo><span>板受力筋</span><ComboArrow /></Combo>
        <Combo><span>C8-200</span><ComboArrow /></Combo>
        <Combo><span>分层板1</span><ComboArrow /></Combo>
      </ComboBar>

      <Main>
        <Nav>
          <Strip><X /></Strip>
          <NavTitle>导航栏</NavTitle>
          <NavTools>
            <NavTool $w={16}><Icon n="plus" /></NavTool>
            <NavTool $on $w={24}><Icon n="list" /></NavTool>
            <NavTool $on $w={24}><Icon n="detail" /></NavTool>
          </NavTools>
          <NavList>
            {navRows.map(r => r.t === 'r' ? (
              <NavRow key={r.l} $on={r.on}><NavIcon n={r.n} /><span>{r.l}</span></NavRow>
            ) : (
              <NavHead key={r.l}><HeadText>{r.l}{r.dot && <RedDot />}</HeadText></NavHead>
            ))}
          </NavList>
          <ScrollThumb />
        </Nav>
        <Mid>
          <Panel $h={333}>
            <Strip><X /></Strip>
            <TabRow><PTab $on>构件列表</PTab><PTab>图纸管理</PTab></TabRow>
            <PTools>
              <PTool $w={67}><Icon n="new" /><span>新建</span><Caret /></PTool>
              <PTool $w={57}><Icon n="copy" /><span>复制</span></PTool>
              <PTool $w={55}><Icon n="del" /><span>删除</span></PTool>
              <PTool $w={70}><Icon n="layercopy" /><span>层间复制</span></PTool>
              <MoreBtn>▸▸</MoreBtn>
            </PTools>
            <SearchRow><span>搜索构件...</span><I s={14}>{icons.search}</I></SearchRow>
            <Tree>
              <TreeRoot><TreeArrow />板受力筋</TreeRoot>
              <Leaf><LeafText $on>C8-200  &lt;130&gt;</LeafText></Leaf>
              <Leaf><LeafText>C8-150  &lt;32&gt;</LeafText></Leaf>
              <Leaf><LeafText>a10-200  &lt;4&gt;</LeafText></Leaf>
            </Tree>
          </Panel>
          <Panel>
            <Strip><X /></Strip>
            <TabRow><PTab $on>属性列表</PTab><PTab>图层管理</PTab></TabRow>
            <TableWrap>
              <Table>
                <colgroup><col width="22" /><col width="101" /><col width="110" /><col width="41" /></colgroup>
                <tbody>
                  <Tr><Th /><Th>属性名称</Th><Th $on>属性值</Th><Th>附加</Th></Tr>
                  <Tr><Idx>1</Idx><Td $blue>名称</Td><Td>C8-200</Td><Empty /></Tr>
                  <Tr><Idx>2</Idx><Td>类别</Td><Td>底筋</Td><Cb /></Tr>
                  <Tr><Idx>3</Idx><Td $blue>钢筋信息</Td><Td><Rebar viewBox="0 0 10 11"><ellipse cx="5" cy="4.500" rx="4" ry="3" /><path d="M5 0v9M0 9.500h10" /></Rebar>8@200</Td><Cb /></Tr>
                  <Tr><Idx $on>4</Idx><Td>左弯折(mm)</Td><Td $focus>(0)</Td><Cb /></Tr>
                  <Tr><Idx>5</Idx><Td>右弯折(mm)</Td><Td>(0)</Td><Cb /></Tr>
                  <Tr><Idx>6</Idx><Td>备注</Td><Td /><Cb /></Tr>
                  <Tr><Idx>7</Idx><Td><RowInner><Expander>−</Expander>钢筋业务属性</RowInner></Td><Td /><Empty /></Tr>
                  {[
                    ['8', '钢筋锚固', '(35)', false], ['9', '钢筋搭接', '(49)', false], ['10', '归类名称', '(C8-200)', true],
                    ['11', '汇总信息', '(板受力筋)', true], ['12', '计算设置', '按默认计算设置...', false],
                    ['13', '节点设置', '按默认节点设置...', false], ['14', '搭接设置', '按默认搭接设置...', false], ['15', '长度调整(...', '', true],
                  ].map(([i, n, v, c]) => (
                    <Tr key={String(i)}>
                      <Idx>{i}</Idx>
                      <Td $pad={7}><RowInner><Branch $end={i === '15'} />{n}</RowInner></Td>
                      <Td>{v}</Td>
                      {c ? <Cb /> : <Empty />}
                    </Tr>
                  ))}
                  <Tr><Idx>16</Idx><Td><RowInner><Expander>+</Expander>显示样式</RowInner></Td><Td /><Empty /></Tr>
                </tbody>
              </Table>
            </TableWrap>
          </Panel>
        </Mid>
        <Divider><Handle /></Divider>
        <Canvas>
          <CadDrawing />
          <Toast>点击图标可调整提示信息位置</Toast>
        </Canvas>
      </Main>
    </Page>
  );
}
